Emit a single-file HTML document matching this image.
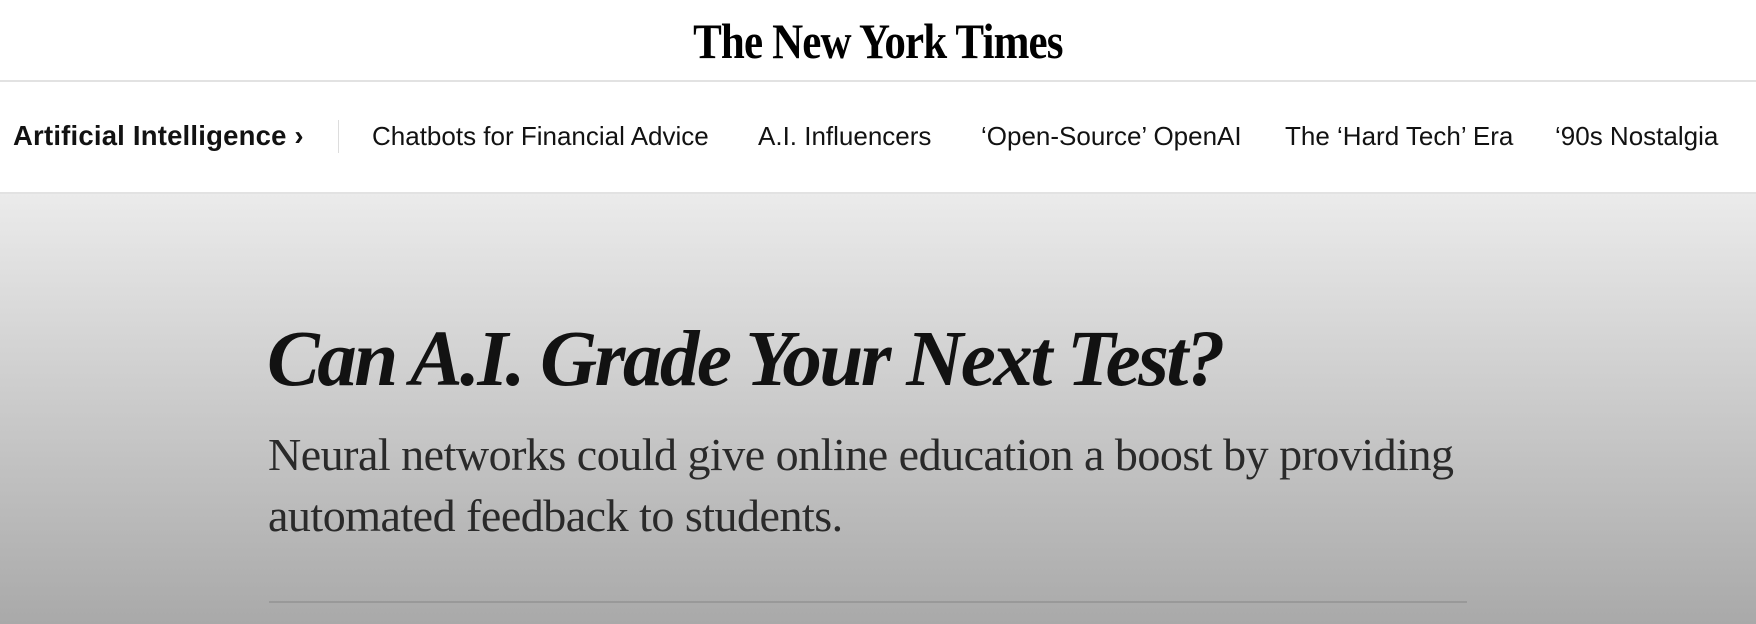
<!DOCTYPE html>
<html><head><meta charset="utf-8"><style>
*{margin:0;padding:0;box-sizing:border-box}
body{width:1756px;height:624px;overflow:hidden;background:#fff;font-family:"Liberation Sans",sans-serif;position:relative}
.logo{position:absolute;top:12px;left:0;width:1756px;text-align:center;font-family:"Liberation Serif",serif;font-weight:bold;font-size:50px;color:#000;letter-spacing:-1px}
.logo span{display:inline-block;transform:scaleX(0.86)}
.l1{position:absolute;top:80px;left:0;width:1756px;height:2px;background:#e2e2e2}
.nav{position:absolute;top:0;left:0;width:1756px;height:193px}
.nav div{position:absolute;top:121px;font-size:26px;color:#121212;white-space:nowrap}
.sep{position:absolute;left:338px;top:120px;width:1px;height:33px;background:#ddd}
.l2{position:absolute;top:192px;left:0;width:1756px;height:2px;background:#e2e2e2}
.hero{position:absolute;top:194px;left:0;width:1756px;height:430px;background:linear-gradient(#ebebeb,#a9a9a9)}
h1{position:absolute;left:267px;top:320px;font-family:"Liberation Serif",serif;font-style:italic;font-weight:bold;font-size:79px;color:#121212;white-space:nowrap;letter-spacing:-2.5px;line-height:1}
p{position:absolute;left:268px;top:424px;width:1260px;font-family:"Liberation Serif",serif;font-size:46px;line-height:61px;color:#2a2a2a;letter-spacing:-0.5px}
.l3{position:absolute;left:269px;top:601px;width:1198px;height:2px;background:#999}
</style></head><body>
<div class="logo"><span>The New York Times</span></div>
<div class="l1"></div>
<div class="nav">
<div style="left:13px;font-weight:bold;font-size:27.5px;letter-spacing:0.2px;top:120px">Artificial Intelligence ›</div>
<div style="left:372px">Chatbots for Financial Advice</div>
<div style="left:758px">A.I. Influencers</div>
<div style="left:981px">‘Open-Source’ OpenAI</div>
<div style="left:1285px">The ‘Hard Tech’ Era</div>
<div style="left:1555px">‘90s Nostalgia</div>
</div>
<div class="sep"></div>
<div class="l2"></div>
<div class="hero"></div>
<h1>Can A.I. Grade Your Next Test?</h1>
<p>Neural networks could give online education a boost by providing automated feedback to students.</p>
<div class="l3"></div>
</body></html>
